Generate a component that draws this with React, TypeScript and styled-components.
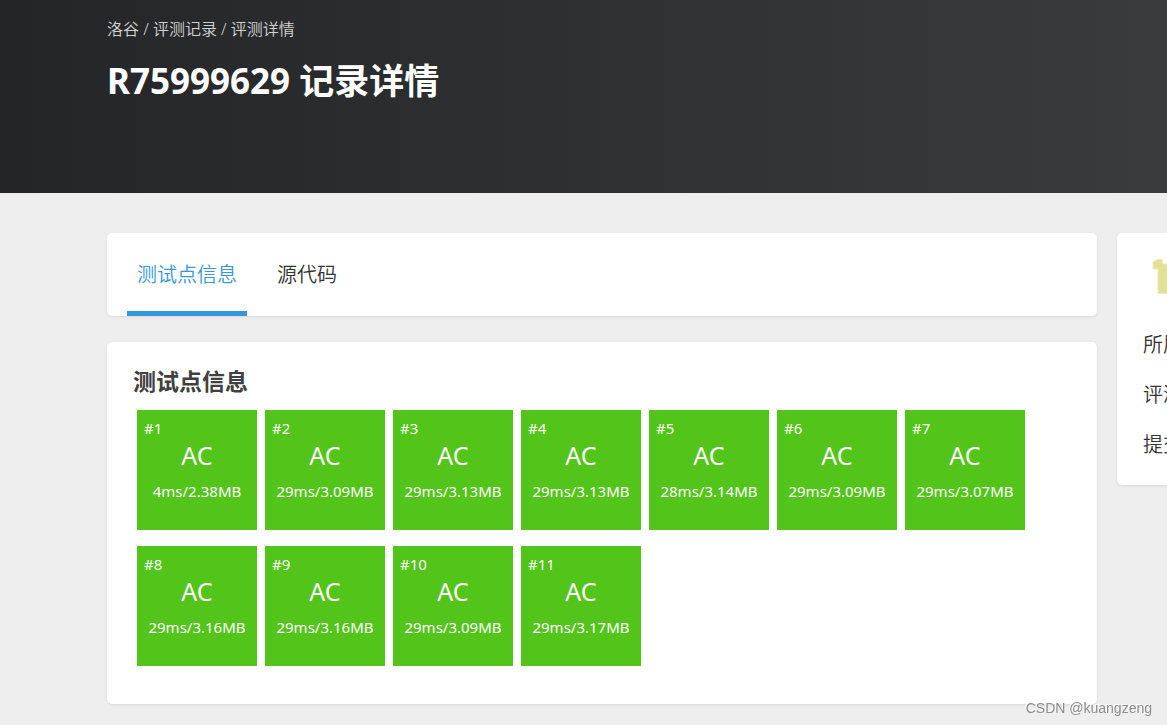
import React from 'react';
import styled, { createGlobalStyle } from 'styled-components';

const GlobalStyle = createGlobalStyle`
  * { box-sizing: border-box; }
  html { min-height: 100%; background: #eee; }
  body {
    margin: 0;
    color: #333;
    font-family: "Noto Sans", "Noto Sans CJK SC", sans-serif;
    font-size: 16px;
  }
  h1, h2, p { margin: 0; }
`;

const Page = styled.div`
  min-height: 100vh;
  overflow: hidden;
`;

const Header = styled.header`
  min-height: 193px;
  padding: 17px 20px 0 107px;
  color: #fff;
  background: linear-gradient(90deg, #242527, #3a3b3c);
`;

const Breadcrumb = styled.nav`
  color: #d3d3d4;
  line-height: 24px;
  font-weight: 350;
  white-space: pre;

  a {
    color: inherit;
    text-decoration: none;
  }
`;

const PageTitle = styled.h1`
  margin-top: 16px;
  font-size: 35px;
  line-height: 48px;
  font-weight: 700;
`;

const Content = styled.div`
  display: flex;
  align-items: flex-start;
  gap: 20px;
  padding: 40px 0 20px 107px;
`;

const Main = styled.main`
  flex: 1;
  min-width: 0;
`;

const Card = styled.section`
  background: #fff;
  border-radius: 5px;
  box-shadow: 0 1px 3px rgba(26, 26, 26, 0.1);
`;

const TabCard = styled(Card)`
  display: flex;
  gap: 20px;
  margin-bottom: 26px;
  padding: 0 20px;
`;

const Tab = styled.button<{ $active?: boolean }>`
  height: 83px;
  padding: 3px 10px 0;
  border: 0;
  border-bottom: 5px solid ${(p) => (p.$active ? '#3498db' : 'transparent')};
  background: none;
  color: ${(p) => (p.$active ? '#3498db' : '#333')};
  font-family: inherit;
  font-size: 20px;
  font-weight: 350;
  cursor: pointer;
`;

const ResultCard = styled(Card)`
  padding: 23px 26px 38px;
`;

const SectionTitle = styled.h2`
  margin-bottom: 13px;
  color: #404040;
  font-size: 23px;
  line-height: 32px;
  font-weight: 700;
`;

const Cases = styled.div`
  display: flex;
  flex-wrap: wrap;
  gap: 16px 8px;
  padding: 0 4px;
`;

const Case = styled.article`
  width: 120px;
  height: 120px;
  padding: 8px 7px;
  background: #52c41a;
  color: #fff;
  text-align: center;
`;

const CaseId = styled.p`
  font-size: 15px;
  line-height: 20px;
  text-align: left;
`;

const Status = styled.p`
  font-size: 25px;
  line-height: 34px;
`;

const Usage = styled.p`
  margin: 9px -7px 0;
  font-size: 15px;
  line-height: 20px;
`;

const Aside = styled(Card).attrs({ as: 'aside' })`
  flex: 0 0 350px;
  margin-right: -300px;
  padding: 26px 26px 25px;
`;

const Logo = styled.svg`
  display: block;
  margin: 0 0 21px 9px;
`;

const Info = styled.div`
  font-size: 20px;
  line-height: 30px;
  font-weight: 350;
  white-space: nowrap;

  & + & {
    margin-top: 20px;
  }
`;

const Watermark = styled.div`
  position: fixed;
  right: 15px;
  bottom: 7px;
  color: #8c8c8c;
  font-family: "Liberation Sans", sans-serif;
  font-size: 14px;
  line-height: 20px;
  text-shadow: -1px -1px 0 #fff;
`;

const usages = [
  '4ms/2.38MB',
  '29ms/3.09MB',
  '29ms/3.13MB',
  '29ms/3.13MB',
  '28ms/3.14MB',
  '29ms/3.09MB',
  '29ms/3.07MB',
  '29ms/3.16MB',
  '29ms/3.16MB',
  '29ms/3.09MB',
  '29ms/3.17MB',
];

export default function App() {
  return (
    <Page>
      <GlobalStyle />
      <Header>
        <Breadcrumb>
          <a href="#home">洛谷</a> / <a href="#records">评测记录</a> / <a href="#detail">评测详情</a>
        </Breadcrumb>
        <PageTitle>R75999629 记录详情</PageTitle>
      </Header>
      <Content>
        <Main>
          <TabCard>
            <Tab $active>测试点信息</Tab>
            <Tab>源代码</Tab>
          </TabCard>
          <ResultCard>
            <SectionTitle>测试点信息</SectionTitle>
            <Cases>
              {usages.map((usage, i) => (
                <Case key={i}>
                  <CaseId>#{i + 1}</CaseId>
                  <Status>AC</Status>
                  <Usage>{usage}</Usage>
                </Case>
              ))}
            </Cases>
          </ResultCard>
        </Main>
        <Aside>
          <Logo width="48" height="50" viewBox="0 0 48 50" aria-hidden="true">
            <path
              d="M1 3 Q4 2 5 0.5 H10.5 V5 H24 V34.500 H6 V10 H1 Z"
              fill="#e3e196"
              stroke="#eeedb8"
              strokeWidth="1"
            />
          </Logo>
          <Info>所属题目</Info>
          <Info>评测状态</Info>
          <Info>提交时间</Info>
        </Aside>
      </Content>
      <Watermark>CSDN @kuangzeng</Watermark>
    </Page>
  );
}
